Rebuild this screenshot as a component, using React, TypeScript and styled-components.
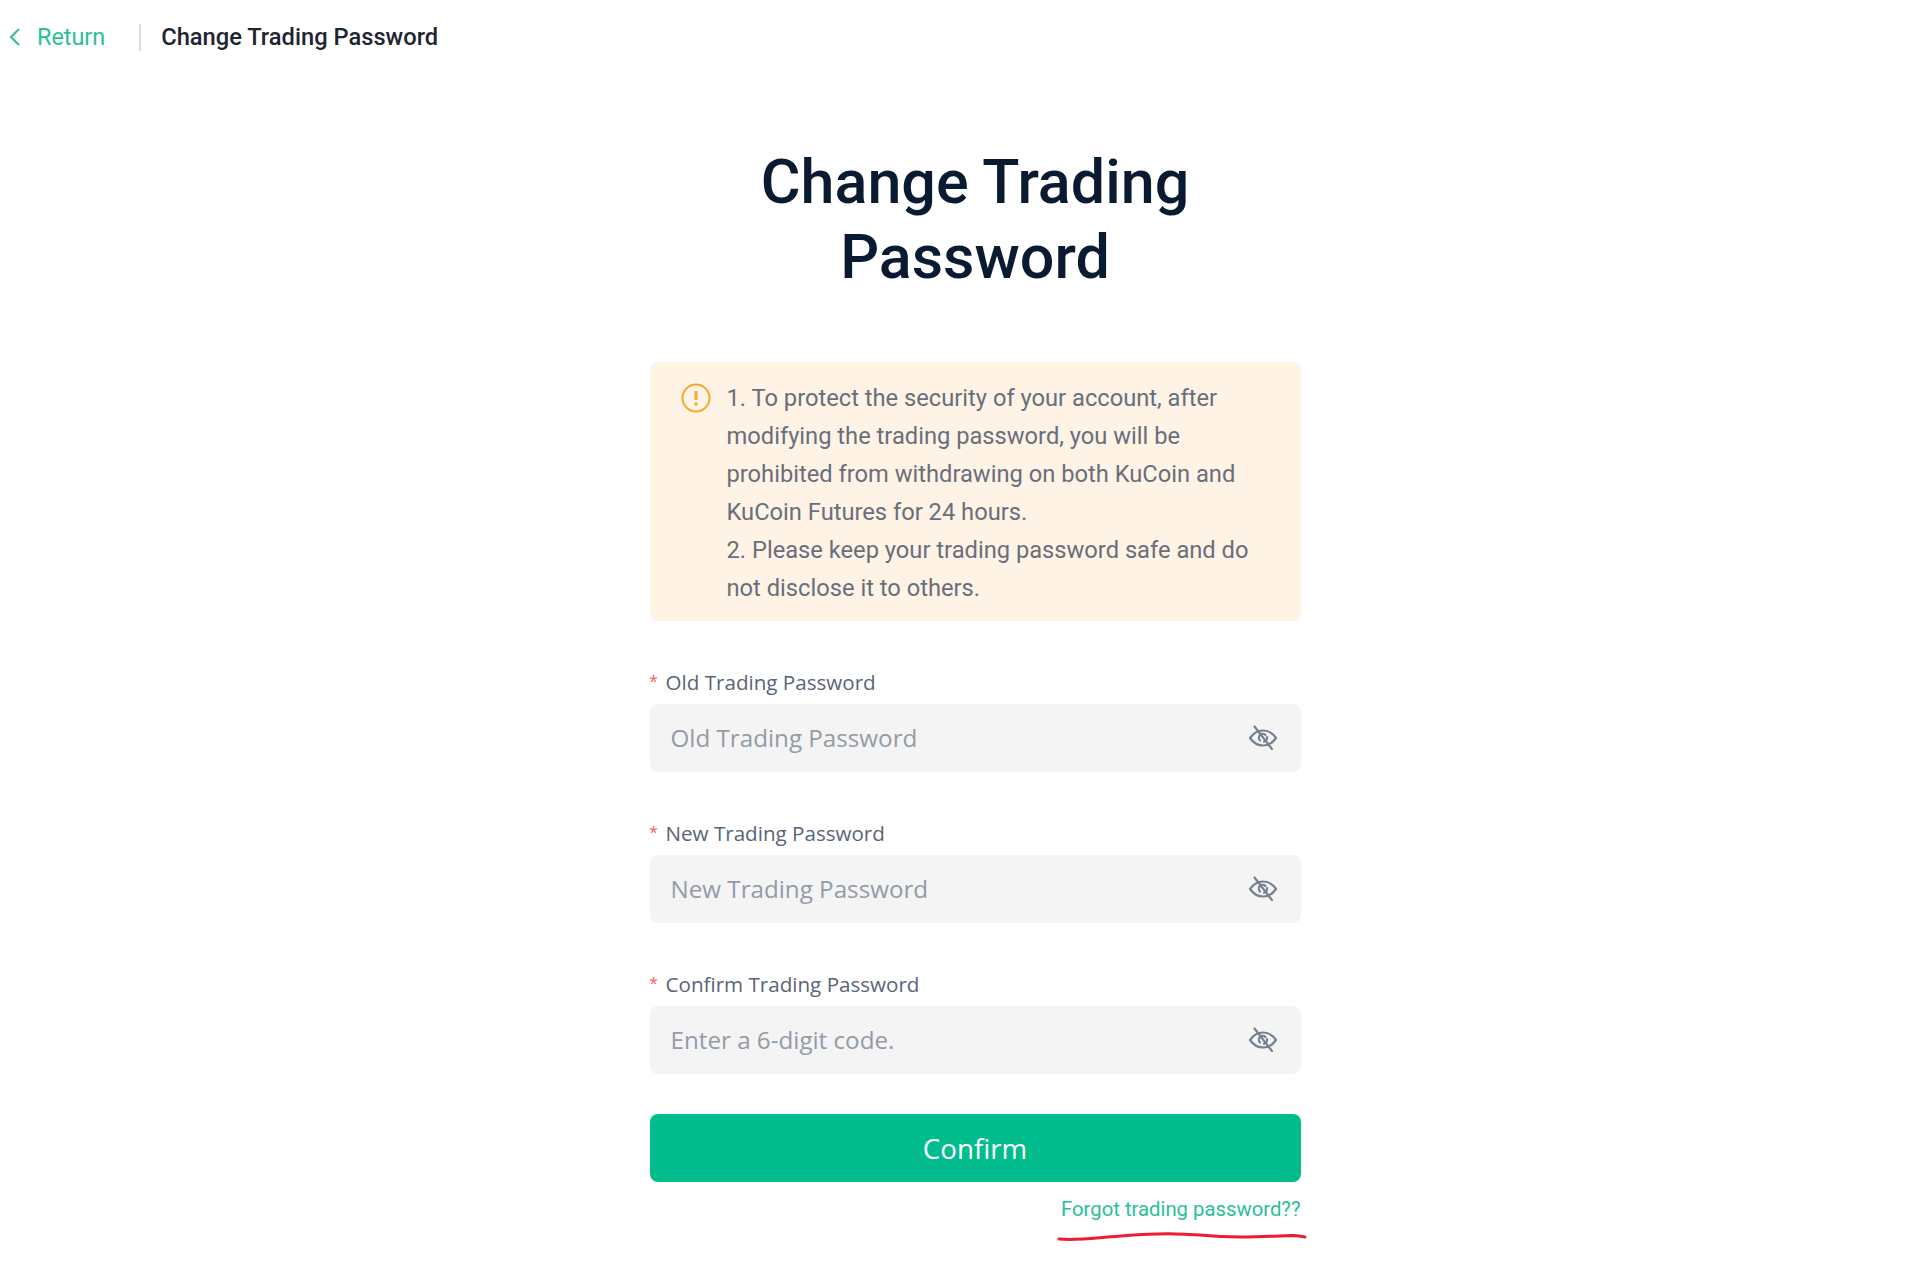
import React from "react";
import styled, { createGlobalStyle } from "styled-components";

const Global = createGlobalStyle`
  html, body { margin: 0; padding: 0; background: #fff; }
  * { box-sizing: border-box; }
  body { font-family: Roboto, "Liberation Sans", sans-serif; }
`;

const Page = styled.div`
  width: 1920px;
  height: 1272px;
  overflow: hidden;
  background: #fff;
`;

const TopBar = styled.header`
  display: flex;
  align-items: center;
  height: 74px;
  padding-left: 8px;
`;

const BackLink = styled.a`
  display: flex;
  align-items: center;
  gap: 15px;
  color: #2bbf98;
  font-size: 23.4px;
  line-height: 28px;
`;

const Divider = styled.span`
  width: 2px;
  height: 27px;
  margin: 0 20px 0 34px;
  background: #dcdcdc;
`;

const TopTitle = styled.span`
  color: #1c2531;
  font-size: 23.7px;
  font-weight: 500;
`;

const Main = styled.main`
  width: 651px;
  margin: 0 auto;
  position: relative;
  left: 15px;
`;

const Title = styled.h1`
  margin: 71px -40px 0;
  text-align: center;
  color: #0a1a30;
  font-size: 61px;
  line-height: 75px;
  font-weight: 500;
`;

const Alert = styled.div`
  display: flex;
  gap: 16px;
  margin-top: 67px;
  padding: 16.5px 43px 14.5px 31px;
  background: #fff3e6;
  border-radius: 8px;
`;

const AlertIcon = styled.svg`
  flex: none;
  width: 30px;
  height: 30px;
  margin-top: 4px;
`;

const AlertText = styled.div`
  color: #686f7b;
  font-size: 23.7px;
  line-height: 38px;
`;

const Field = styled.div`
  margin-top: 46px;
  & + & { margin-top: 46px; }
`;

const Label = styled.label`
  display: flex;
  gap: 8px;
  height: 37px;
  color: #5a6577;
  font-family: "Open Sans", sans-serif;
  font-size: 20.6px;
  line-height: 30px;
`;

const Star = styled.span`
  color: #f8636a;
  font-family: "Liberation Sans", sans-serif;
`;

const InputBox = styled.div`
  display: flex;
  align-items: center;
  justify-content: space-between;
  height: 68px;
  padding: 0 23px 0 21px;
  background: #f4f4f5;
  border-radius: 8px;
`;

const Placeholder = styled.span`
  color: #939ba6;
  font-family: "Open Sans", sans-serif;
  font-size: 24.2px;
  position: relative;
  top: -1px;
`;

const ConfirmButton = styled.button`
  display: block;
  width: 100%;
  height: 68px;
  margin-top: 40px;
  border: 0;
  border-radius: 8px;
  background: #01bc8d;
  color: #fff;
  font-family: "Open Sans", sans-serif;
  font-size: 27.7px;
`;

const ForgotRow = styled.div`
  position: relative;
  margin-top: 13px;
  text-align: right;
  color: #2bbf98;
  font-size: 20.3px;
  line-height: 28px;
`;

const Scribble = styled.svg`
  position: absolute;
  right: -6px;
  top: 36px;
  width: 250px;
  height: 12px;
`;

const EyeOff = () => (
  <svg width="30" height="30" viewBox="0 0 30 30" fill="none" stroke="#758090" strokeWidth="2.2" strokeLinecap="round" strokeLinejoin="round">
    <path d="M2 15c3.500-5 8-7.500 13-7.500S24.500 10 28 15c-3.500 5-8 7.500-13 7.500S5.500 20 2 15z" />
    <path d="M12 17.500a3.800 3.800 0 0 1 5.500-5.500" />
    <path d="M19 14a4 4 0 0 1-3 4.700" />
    <path d="M6.500 3.500 24 26" />
  </svg>
);

const fields = [
  { label: "Old Trading Password", placeholder: "Old Trading Password" },
  { label: "New Trading Password", placeholder: "New Trading Password" },
  { label: "Confirm Trading Password", placeholder: "Enter a 6-digit code." },
];

export default function App() {
  return (
    <Page>
      <Global />
      <TopBar>
        <BackLink>
          <svg width="14" height="20" viewBox="0 0 14 20" fill="none" stroke="#2bbf98" strokeWidth="2">
            <path d="M11 2 3 10l8 8" />
          </svg>
          Return
        </BackLink>
        <Divider />
        <TopTitle>Change Trading Password</TopTitle>
      </TopBar>
      <Main>
        <Title>
          Change Trading
          <br />
          Password
        </Title>
        <Alert>
          <AlertIcon viewBox="0 0 30 30" fill="none">
            <circle cx="15" cy="15" r="13.500" stroke="#f7a72f" strokeWidth="2" />
            <path d="M15 8v9" stroke="#f7a72f" strokeWidth="3" />
            <circle cx="15" cy="21" r="1.700" fill="#f7a72f" />
          </AlertIcon>
          <AlertText>
            1. To protect the security of your account, after modifying the trading password, you will be prohibited from withdrawing on both KuCoin and KuCoin Futures for 24 hours.
            <br />
            2. Please keep your trading password safe and do not disclose it to others.
          </AlertText>
        </Alert>
        {fields.map((f) => (
          <Field key={f.label}>
            <Label>
              <Star>*</Star>
              {f.label}
            </Label>
            <InputBox>
              <Placeholder>{f.placeholder}</Placeholder>
              <EyeOff />
            </InputBox>
          </Field>
        ))}
        <ConfirmButton>Confirm</ConfirmButton>
        <ForgotRow>
          Forgot trading password??
          <Scribble viewBox="0 0 250 12" fill="none">
            <path d="M2 8C20 10 35 7 70 4.500 110 1.500 130 3 165 5.500 190 7 215 5 235 4.500 242 4.500 246 6 248 6" stroke="#ee1c2e" strokeWidth="3" strokeLinecap="round" />
          </Scribble>
        </ForgotRow>
      </Main>
    </Page>
  );
}
